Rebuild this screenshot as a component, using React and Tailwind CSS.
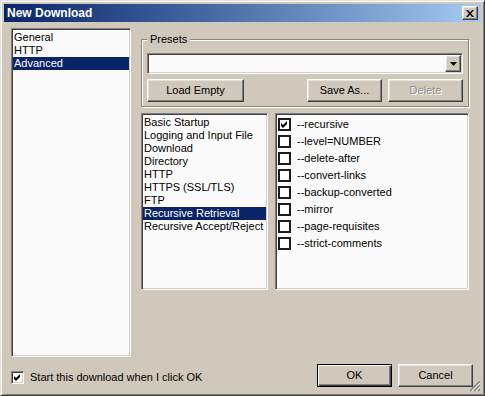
import React from "react";

const bg = "bg-[#cfc8bb]";
const raised =
  "border border-t-white border-l-white border-r-[#404040] border-b-[#404040] shadow-[inset_-1px_-1px_0_#808080,inset_1px_1px_0_#e6e2da]";
const sunken =
  "border border-t-[#808080] border-l-[#808080] border-r-white border-b-white shadow-[inset_1px_1px_0_#404040,inset_-1px_-1px_0_#d4d0c8]";

const pages = ["General", "HTTP", "Advanced"];
const categories = [
  "Basic Startup",
  "Logging and Input File",
  "Download",
  "Directory",
  "HTTP",
  "HTTPS (SSL/TLS)",
  "FTP",
  "Recursive Retrieval",
  "Recursive Accept/Reject",
];
const options = [
  { name: "--recursive", on: true },
  { name: "--level=NUMBER" },
  { name: "--delete-after" },
  { name: "--convert-links" },
  { name: "--backup-converted" },
  { name: "--mirror" },
  { name: "--page-requisites" },
  { name: "--strict-comments" },
];

const Tick = () => (
  <svg width="7" height="7" viewBox="0 0 7 7">
    <path d="M0 2 L2 4 L6 0 L6 3 L2 7 L0 5 Z" fill="#000" />
  </svg>
);

const ListBox = ({ items, selected, className }) => (
  <div className={`${sunken} bg-[#fbfbfb] p-[1px] pt-[2px] ${className}`}>
    {items.map((item) => (
      <div
        key={item}
        className={`h-[13px] px-[1px] whitespace-nowrap ${
          item === selected ? "bg-[#0a246a] text-white" : ""
        }`}
      >
        {item}
      </div>
    ))}
  </div>
);

const Button = ({ children, className = "" }) => (
  <button className={`h-[23px] ${bg} ${raised} flex items-center justify-center ${className}`}>
    {children}
  </button>
);

export default function App() {
  return (
    <div
      className={`relative w-[485px] h-[396px] ${bg} text-black text-[11px] leading-[13px] font-['Liberation_Sans',Arial,sans-serif] border border-t-[#e6e2da] border-l-[#e6e2da] border-r-[#404040] border-b-[#404040] shadow-[inset_1px_1px_0_#fff,inset_-1px_-1px_0_#808080] p-[3px] flex flex-col select-none`}
    >
      {/* title bar */}
      <div className="h-[18px] flex items-center justify-between bg-gradient-to-r from-[#0a246a] to-[#a6caf0] pl-[3px] pr-[3px]">
        <span className="text-white font-bold text-[12px]">New Download</span>
        <div className={`w-[16px] h-[14px] ${bg} ${raised} flex items-center justify-center`}>
          <svg width="8" height="7" viewBox="0 0 8 7">
            <path d="M0 0h2l2 2.4L6 0h2L5 3.5 8 7H6L4 4.6 2 7H0l3-3.5z" fill="#000" />
          </svg>
        </div>
      </div>

      <div className="flex-1 flex flex-col pl-[7px] pr-[8px] pt-[6px] pb-[5px]">
        <div className="flex gap-[10px] h-[329px]">
          <ListBox items={pages} selected="Advanced" className="w-[120px] h-full" />

          <div className="w-[328px] flex flex-col">
            <fieldset className="mt-[5px] min-w-0 border border-[#8a857c] shadow-[inset_1px_1px_0_#fff,1px_1px_0_#fff] px-[5px] pt-[7px] pb-[4px]">
              <legend className={`px-[3px] ${bg}`}>Presets</legend>
              <div className={`h-[21px] bg-[#fbfbfb] ${sunken} flex items-center justify-end pr-[1px]`}>
                <div className={`w-[16px] h-[17px] ${bg} ${raised} flex items-center justify-center`}>
                  <svg width="7" height="4" viewBox="0 0 7 4">
                    <path d="M0 0h7L3.5 4z" fill="#000" />
                  </svg>
                </div>
              </div>
              <div className="mt-[5px] flex justify-between">
                <Button className="w-[97px]">Load Empty</Button>
                <div className="flex gap-[6px]">
                  <Button className="w-[75px]">Save As...</Button>
                  <Button className="w-[75px] text-[#8d8d8d] [text-shadow:1px_1px_0_#fff]">Delete</Button>
                </div>
              </div>
            </fieldset>

            <div className="mt-[6px] flex gap-[7px] h-[177px]">
              <ListBox items={categories} selected="Recursive Retrieval" className="w-[127px] h-full" />
              <div className={`flex-1 h-full ${sunken} bg-[#fbfbfb] p-[1px] pt-[2px]`}>
                {options.map((o) => (
                  <div key={o.name} className="h-[17px] flex items-center gap-[6px] pl-[1px] whitespace-nowrap">
                    <span className="w-[13px] h-[13px] border-2 border-[#1c1c1c] bg-white flex items-center justify-center">
                      {o.on && <Tick />}
                    </span>
                    {o.name}
                  </div>
                ))}
              </div>
            </div>
          </div>
        </div>

        <div className="mt-[7px] flex items-end justify-between">
          <label className="mb-[3px] flex items-center gap-[6px]">
            <span className={`w-[13px] h-[13px] ${sunken} bg-white flex items-center justify-center`}>
              <Tick />
            </span>
            Start this download when I click OK
          </label>
          <div className="flex gap-[6px]">
            <button
              className={`w-[75px] h-[23px] ${bg} border border-black shadow-[inset_1px_1px_0_#fff,inset_-1px_-1px_0_#404040,inset_-2px_-2px_0_#808080]`}
            >
              OK
            </button>
            <Button className="w-[75px]">Cancel</Button>
          </div>
        </div>
      </div>

      {/* size grip */}
      <svg className="absolute right-[3px] bottom-[3px]" width="11" height="11" viewBox="0 0 11 11">
        <path d="M10 0L0 10M10 4L4 10M10 8L8 10" stroke="#808080" strokeWidth="1.4" />
        <path d="M10 2L2 10M10 6L6 10" stroke="#fff" strokeWidth="1" />
      </svg>
    </div>
  );
}
